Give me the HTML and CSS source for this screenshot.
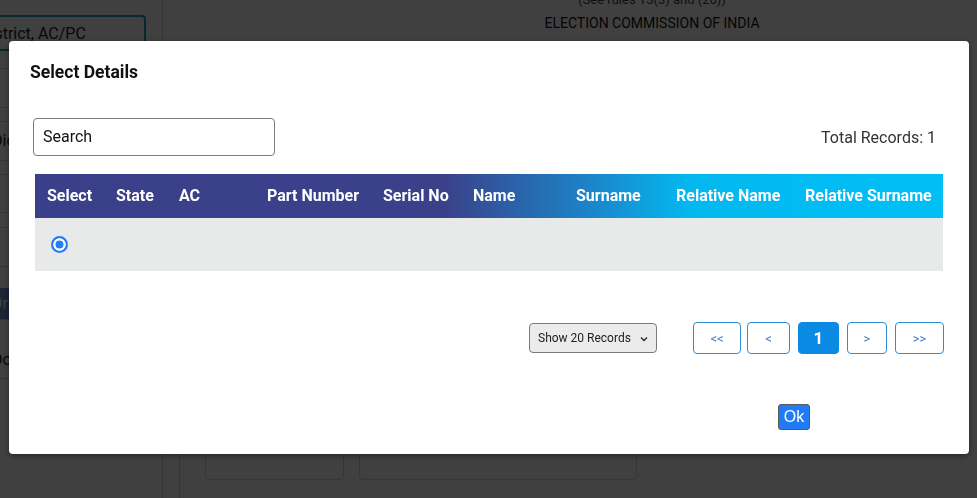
FILE: index.html
```html
<!DOCTYPE html>
<html lang="en">
<head>
<meta charset="utf-8">
<title>Select Details</title>
<link rel="stylesheet" href="styles.css">
</head>
<body>
<div class="page">
  <aside class="sidebar">
    <div class="district-box">District, AC/PC</div>
    <div class="srow h18"></div>
    <div class="srow h39"></div>
    <div class="srow h14"></div>
    <div class="srow h39 label">Dic</div>
    <div class="srow h14"></div>
    <div class="srow h38"></div>
    <div class="srow h15"></div>
    <div class="srow h39"></div>
    <div class="side-active">Dr</div>
    <div class="srow h38 label">Do</div>
  </aside>
  <main class="main">
    <header class="doc-head">
      <div class="doc-rules">(See rules 13(3) and (26))</div>
      <div class="doc-title">ELECTION COMMISSION OF INDIA</div>
    </header>
    <section class="doc-panel">
      <div class="doc-fields">
        <div class="doc-field small"></div>
        <div class="doc-field wide"></div>
      </div>
    </section>
  </main>
</div>

<div class="backdrop"></div>

<div class="modal">
  <div class="modal-head">
    <h2 class="modal-title">Select Details</h2>
  </div>
  <div class="modal-body">
    <div class="toolbar">
      <div class="search">Search</div>
      <div class="total">Total Records: 1</div>
    </div>
    <table class="grid">
      <thead>
        <tr>
          <th class="c-select">Select</th>
          <th class="c-state">State</th>
          <th class="c-ac">AC</th>
          <th class="c-part">Part Number</th>
          <th class="c-serial">Serial No</th>
          <th class="c-name">Name</th>
          <th class="c-surname">Surname</th>
          <th class="c-rname">Relative Name</th>
          <th class="c-rsurname">Relative Surname</th>
        </tr>
      </thead>
      <tbody>
        <tr>
          <td class="radio-cell"><span class="radio"></span></td>
          <td></td><td></td><td></td><td></td><td></td><td></td><td></td><td></td>
        </tr>
      </tbody>
    </table>
    <div class="pager">
      <div class="page-size">
        <span>Show 20 Records</span>
        <svg class="chev" width="8" height="6" viewBox="0 0 8 6"><path d="M1 1.5 L4 4.5 L7 1.5" fill="none" stroke="#222" stroke-width="1.3"/></svg>
      </div>
      <div class="pages">
        <span class="pbtn w48">&lt;&lt;</span>
        <span class="pbtn w43">&lt;</span>
        <span class="pbtn current w41">1</span>
        <span class="pbtn w40">&gt;</span>
        <span class="pbtn w49">&gt;&gt;</span>
      </div>
    </div>
    <div class="modal-foot">
      <span class="ok">Ok</span>
    </div>
  </div>
</div>
</body>
</html>
```

FILE: styles.css
```css
* { box-sizing: border-box; }

html, body {
  margin: 0;
  padding: 0;
  width: 977px;
  height: 498px;
  overflow: hidden;
  background: #ffffff;
  font-family: Roboto, "Liberation Sans", Arial, sans-serif;
  color: #212529;
}

/* ---------- background page ---------- */
.page {
  display: flex;
  height: 498px;
}

.sidebar {
  width: 163px;
  flex: none;
  border-right: 1px solid #cfcfcf;
  padding-top: 15px;
  overflow: hidden;
}

.district-box {
  width: 176px;
  height: 36px;
  margin-left: -30px;
  border: 2px solid #1a9fb8;
  border-radius: 4px;
  padding: 7px 8px;
  font-size: 16px;
  color: #222;
}

.srow {
  border-bottom: 1px solid #d0d0d0;
}
.h14 { height: 14px; }
.h15 { height: 15px; }
.h18 { height: 18px; }
.h38 { height: 38px; }
.h39 { height: 39px; }

.srow.label {
  font-size: 16px;
  line-height: 38px;
  color: #222;
  margin-left: -8px;
}

.side-active {
  height: 32px;
  margin-top: 21px;
  margin-bottom: 21px;
  background: #6f8fd8;
  color: #fff;
  font-size: 16px;
  line-height: 32px;
  margin-left: -8px;
  border-bottom: 1px solid #d0d0d0;
}

.main {
  flex: 1;
  display: flex;
  flex-direction: column;
}

.doc-head {
  padding-left: 164px;
  text-align: center;
  margin-top: -8px;
}

.doc-rules {
  font-size: 13px;
  line-height: 16px;
  color: #444;
}

.doc-title {
  font-size: 14px;
  line-height: 18px;
  margin-top: 6px;
  color: #111;
}

.doc-panel {
  flex: 1;
  margin-top: 60px;
  margin-left: 16px;
  border-left: 1px solid #cfcfcf;
  display: flex;
  flex-direction: column;
  justify-content: flex-end;
}

.doc-fields {
  display: flex;
  gap: 15px;
  padding-left: 25px;
  margin-bottom: 18px;
}

.doc-field {
  height: 40px;
  border: 1px solid #d6d6d6;
  border-radius: 4px;
}
.doc-field.small { width: 139px; }
.doc-field.wide { width: 278px; }

/* ---------- overlay ---------- */
.backdrop {
  position: fixed;
  inset: 0;
  background: rgba(0, 0, 0, 0.75);
}

.modal {
  position: fixed;
  left: 9px;
  top: 41px;
  width: 960px;
  height: 413px;
  background: #fff;
  border-radius: 4px;
  box-shadow: 0 2px 6px rgba(0, 0, 0, 0.4);
}

.modal-head {
  padding: 21px 21px 0;
}

.modal-title {
  margin: 0;
  font-size: 17.5px;
  line-height: 21px;
  font-weight: 700;
  color: #111;
}

.modal-body {
  padding: 0 26px;
}

.toolbar {
  margin-top: 35px;
  display: flex;
  align-items: center;
  justify-content: space-between;
  padding-right: 7px;
}

.search {
  margin-left: -2px;
  width: 242px;
  height: 38px;
  border: 1px solid #7a7a7a;
  border-radius: 4px;
  padding: 0 9px;
  font-size: 16px;
  line-height: 36px;
  color: #111;
}

.total {
  font-size: 16px;
  color: #333;
}

.grid {
  margin-top: 18px;
  width: 908px;
  border-collapse: collapse;
  table-layout: fixed;
}

.grid thead tr {
  background: linear-gradient(90deg, #3a3f8a 0%, #3a4189 45%, #1a88cc 62%, #03b8ef 72%, #00bff5 100%);
}

.grid th {
  height: 44px;
  padding: 0 0 2px 12px;
  text-align: left;
  color: #fff;
  font-size: 16px;
  font-weight: 700;
  white-space: nowrap;
}

.c-select { width: 69px; }
.c-state { width: 63px; }
.c-ac { width: 88px; }
.c-part { width: 116px; }
.c-serial { width: 90px; }
.c-name { width: 103px; }
.c-surname { width: 100px; }
.c-rname { width: 129px; }
.c-rsurname { width: 150px; }

.grid tbody tr {
  background: #e8e9e9;
}

.grid td {
  height: 53px;
  padding: 0;
}

.grid td.radio-cell {
  padding-left: 16px;
  padding-bottom: 1px;
}

.radio {
  display: block;
  width: 17px;
  height: 17px;
  border-radius: 50%;
  border: 2px solid #2a7cf6;
  background: #2a7cf6;
  box-shadow: inset 0 0 0 2.5px #fff;
}

.pager {
  margin-top: 51px;
  display: flex;
  align-items: center;
  justify-content: flex-end;
  margin-right: -1px;
}

.page-size {
  width: 128px;
  height: 30px;
  border: 1px solid #7a7a7a;
  border-radius: 4px;
  background: #ebebeb;
  display: flex;
  align-items: center;
  justify-content: space-between;
  padding: 0 8px 0 8px;
  font-size: 12px;
  color: #222;
  margin-right: 36px;
}

.chev { margin-top: 1px; }

.pages {
  display: flex;
  gap: 8px;
}

.pbtn {
  height: 32px;
  border: 1px solid #2a8fd8;
  border-radius: 4px;
  display: flex;
  align-items: center;
  justify-content: center;
  font-size: 13px;
  color: #3d76c6;
  background: #fff;
}

.pbtn.current {
  background: #0a8ae3;
  border-color: #0a8ae3;
  color: #fff;
  font-weight: 700;
  font-size: 17px;
}

.w48 { width: 48px; }
.w43 { width: 43px; margin-left: -2px; }
.w41 { width: 41px; }
.w40 { width: 40px; }
.w49 { width: 49px; }

.modal-foot {
  margin-top: 50px;
  display: flex;
  justify-content: flex-end;
  padding-right: 133px;
}

.ok {
  width: 32px;
  height: 26px;
  background: #1f7bf6;
  border: 1px solid #5a5a5a;
  border-radius: 3px;
  color: #fff;
  font-family: "Liberation Sans", Arial, sans-serif;
  font-size: 16px;
  display: flex;
  align-items: center;
  justify-content: center;
}
```
